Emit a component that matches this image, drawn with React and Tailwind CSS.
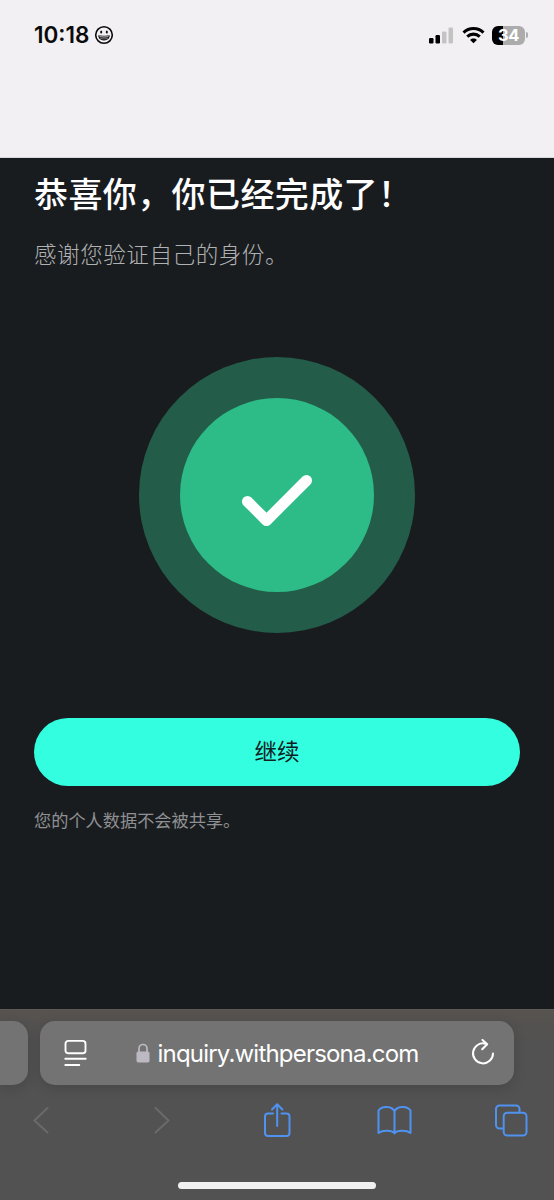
import React from 'react';

const PAGE = {
  title: '恭喜你，你已经完成了！',
  subtitle: '感谢您验证自己的身份。',
  action: '继续',
  footnote: '您的个人数据不会被共享。',
  host: 'inquiry.withpersona.com'
};

function Smiley() {
  return (
    <svg width="20" height="20" viewBox="0 0 20 20" fill="none" className="ml-[5px]">
      <circle cx="10" cy="10" r="8.3" stroke="#0b0b0b" strokeWidth="1.6" />
      <ellipse cx="7.2" cy="6.9" rx="1" ry="1.5" fill="#0b0b0b" />
      <ellipse cx="12.8" cy="6.9" rx="1" ry="1.5" fill="#0b0b0b" />
      <path d="M4.3 10.3c1.8.6 9.6.6 11.4 0 .2 3-2.2 5.2-5.7 5.2s-5.9-2.2-5.7-5.2z" fill="#0b0b0b" />
      <path d="M5.6 11.6c2.5.5 6.3.5 8.8 0" stroke="#e8e8e8" strokeWidth="0.9" />
      <path d="M6.3 13.5c2 .5 5.4.5 7.4 0" stroke="#aaa" strokeWidth="0.7" />
    </svg>
  );
}

function Signal() {
  return (
    <svg width="25" height="17" viewBox="0 0 25 17">
      <rect x="0" y="11" width="4.5" height="5.5" rx="1.2" fill="#000" />
      <rect x="6.5" y="8" width="4.5" height="8.5" rx="1.2" fill="#000" />
      <rect x="13" y="4.5" width="4.5" height="12" rx="1.2" fill="#c4c3c4" />
      <rect x="19.5" y="0.5" width="4.5" height="16" rx="1.2" fill="#c4c3c4" />
    </svg>
  );
}

function Wifi() {
  return (
    <svg width="23" height="18" viewBox="0 0 24 18" fill="none" stroke="#000" strokeWidth="3.2">
      <path d="M1.6 6.5C7.4.9 16.6.9 22.400 6.5" />
      <path d="M5.5 10.7c3.7-3.5 9.3-3.5 13 0" />
      <path d="M12 17.6 8.5 14.200c1.900-1.900 5.100-1.900 7 0z" fill="#000" stroke="none" />
    </svg>
  );
}

function Battery() {
  return (
    <div className="flex items-center">
      <div className="flex h-[19px] w-[33px] items-center justify-center rounded-[6px] bg-[linear-gradient(to_right,#000_34%,#adacad_34%)] text-[16.5px] font-bold leading-none tracking-[-0.4px] text-white">
        34
      </div>
      <div className="ml-px h-[6px] w-[2px] rounded-r-full bg-[#adacad]" />
    </div>
  );
}

function StatusBar() {
  return (
    <header className="flex h-[158px] items-start justify-between border-b border-[#d9d9db] bg-[#f2f0f2] pl-[34px] pr-[26px] pt-[25px]">
      <div className="flex h-[20px] items-center text-[#0b0b0b]">
        <span className="text-[22.5px] font-semibold">10:18</span>
        <Smiley />
      </div>
      <div className="flex h-[20px] items-center gap-[7.5px]">
        <Signal />
        <Wifi />
        <Battery />
      </div>
    </header>
  );
}

function SuccessBadge() {
  return (
    <div className="mt-[86px] flex size-[276px] items-center justify-center self-center rounded-full bg-[#235c49]">
      <div className="flex size-[194px] items-center justify-center rounded-full bg-[#2dbc88]">
        <svg width="72" height="54" viewBox="0 0 72 54" fill="none" stroke="#fff" strokeWidth="11" strokeLinecap="round" strokeLinejoin="round" className="mt-[12px]">
          <path d="M6.5 27.5 25.5 46.5 65.5 6.5" />
        </svg>
      </div>
    </div>
  );
}

function AddressBar() {
  return (
    <div className="flex h-[64px] gap-[12px]">
      <div className="w-[28px] rounded-r-[15px] bg-[#737373] shadow-[0_3px_14px_rgba(0,0,0,0.14)]" />
      <div className="flex w-[474px] items-center rounded-[15px] bg-[#737373] pl-[24px] pr-[19px] shadow-[0_3px_14px_rgba(0,0,0,0.14)]">
        <svg width="23" height="28" viewBox="0 0 23 28" fill="none" stroke="#fff" strokeWidth="1.9" strokeLinecap="round">
          <rect x="1.5" y="1.9" width="20" height="12.4" rx="2.8" />
          <path d="M1.3 19.8h20.4M1.3 26h14" />
        </svg>
        <div className="flex flex-1 items-center justify-center pr-[3px] text-white">
          <svg width="14" height="20" viewBox="0 0 14 20" className="mr-[7px]">
            <path d="M3 9V5.5a4 4 0 0 1 8 0V9" fill="none" stroke="#bdb9c2" strokeWidth="1.7" />
            <rect x="0.5" y="8.5" width="13" height="11" rx="1.8" fill="#bdb9c2" />
          </svg>
          <span className="pt-px text-[24px] leading-none tracking-[-0.8px]">{PAGE.host}</span>
        </div>
        <svg width="24" height="28" viewBox="0 0 24 28" fill="none" stroke="#fff" strokeWidth="2" strokeLinecap="round" strokeLinejoin="round">
          <path d="M14.5 4.7A10 10 0 1 0 22 14.5" />
          <path d="M11.5 0.9 16.2 5.2 11.2 10.3" />
        </svg>
      </div>
    </div>
  );
}

function Toolbar() {
  return (
    <nav className="mt-[17px] flex justify-between pl-[23px] pr-[25px] text-[#4f92f0]">
      <svg width="36" height="36" viewBox="0 0 36 36" fill="none" stroke="#6a6a6a" strokeWidth="2" strokeLinecap="round">
        <path d="M24.5 6 11.5 18.5 24.5 30.5" />
      </svg>
      <svg width="36" height="36" viewBox="0 0 36 36" fill="none" stroke="#6a6a6a" strokeWidth="2" strokeLinecap="round">
        <path d="M14.5 6 27.5 18.5 14.5 30.5" />
      </svg>
      <svg width="36" height="36" viewBox="0 0 36 36" fill="none" stroke="currentColor" strokeWidth="2" strokeLinecap="round" strokeLinejoin="round">
        <path d="M15 11.5h-5a3 3 0 0 0-3 3v16.5a3 3 0 0 0 3 3h18.5a3 3 0 0 0 3-3V14.5a3 3 0 0 0-3-3h-5" />
        <path d="M19.2 24V2.5M14 7.5l5.2-5.3 5.2 5.3" />
      </svg>
      <svg width="36" height="36" viewBox="0 0 36 36" fill="none" stroke="currentColor" strokeWidth="2" strokeLinejoin="round">
        <path d="M18.5 9.5C16.5 3.900 6 3.300 2.500 8.500v22.500c4-3 13.500-3 16 .5 2.500-3.500 12-3.500 16-.5V8.500c-3.500-5.200-14-4.600-16 1V32" />
      </svg>
      <svg width="36" height="36" viewBox="0 0 36 36" fill="none" stroke="currentColor" strokeWidth="2">
        <path d="M10.5 26.5H6.5a3.5 3.5 0 0 1-3.5-3.500V7a3.500 3.500 0 0 1 3.500-3.500h16.500a3.500 3.500 0 0 1 3.500 3.500v3.500" />
        <rect x="10.7" y="10.8" width="22.8" height="22.7" rx="3.5" />
      </svg>
    </nav>
  );
}

export default function App() {
  return (
    <div className="flex h-[1200px] w-[554px] flex-col overflow-hidden bg-[#191c1f] font-[Inter,'Noto_Sans_CJK_SC',sans-serif]">
      <StatusBar />

      <main lang="zh-CN" className="flex h-[851px] flex-col px-[34px] font-['Noto_Sans_CJK_SC',sans-serif]">
        <h1 className="mt-[10px] whitespace-nowrap text-[34px] font-medium leading-[50px] tracking-[0.4px] text-white">{PAGE.title}</h1>
        <p className="mt-[19px] text-[22.6px] font-light leading-[34px] tracking-[0.5px] text-[#b0b1b2]">{PAGE.subtitle}</p>
        <SuccessBadge />
        <button className="mt-[85px] h-[68px] w-[486px] rounded-full bg-[#33ffe0] pb-[2px] text-[22.5px] text-[#10201f]">{PAGE.action}</button>
        <p className="mt-[21px] text-[17.2px] leading-[26px] text-[#8f9092]">{PAGE.footnote}</p>
      </main>

      <footer className="flex h-[191px] flex-col border-t border-[#5c5a58] bg-[linear-gradient(to_bottom,#58534f_0px,#545251_14px,#525252_40px)] pt-[11px]">
        <AddressBar />
        <Toolbar />
        <div className="mt-[44px] h-[7px] w-[198px] self-center rounded-full bg-[#f0f0f0]" />
      </footer>
    </div>
  );
}
